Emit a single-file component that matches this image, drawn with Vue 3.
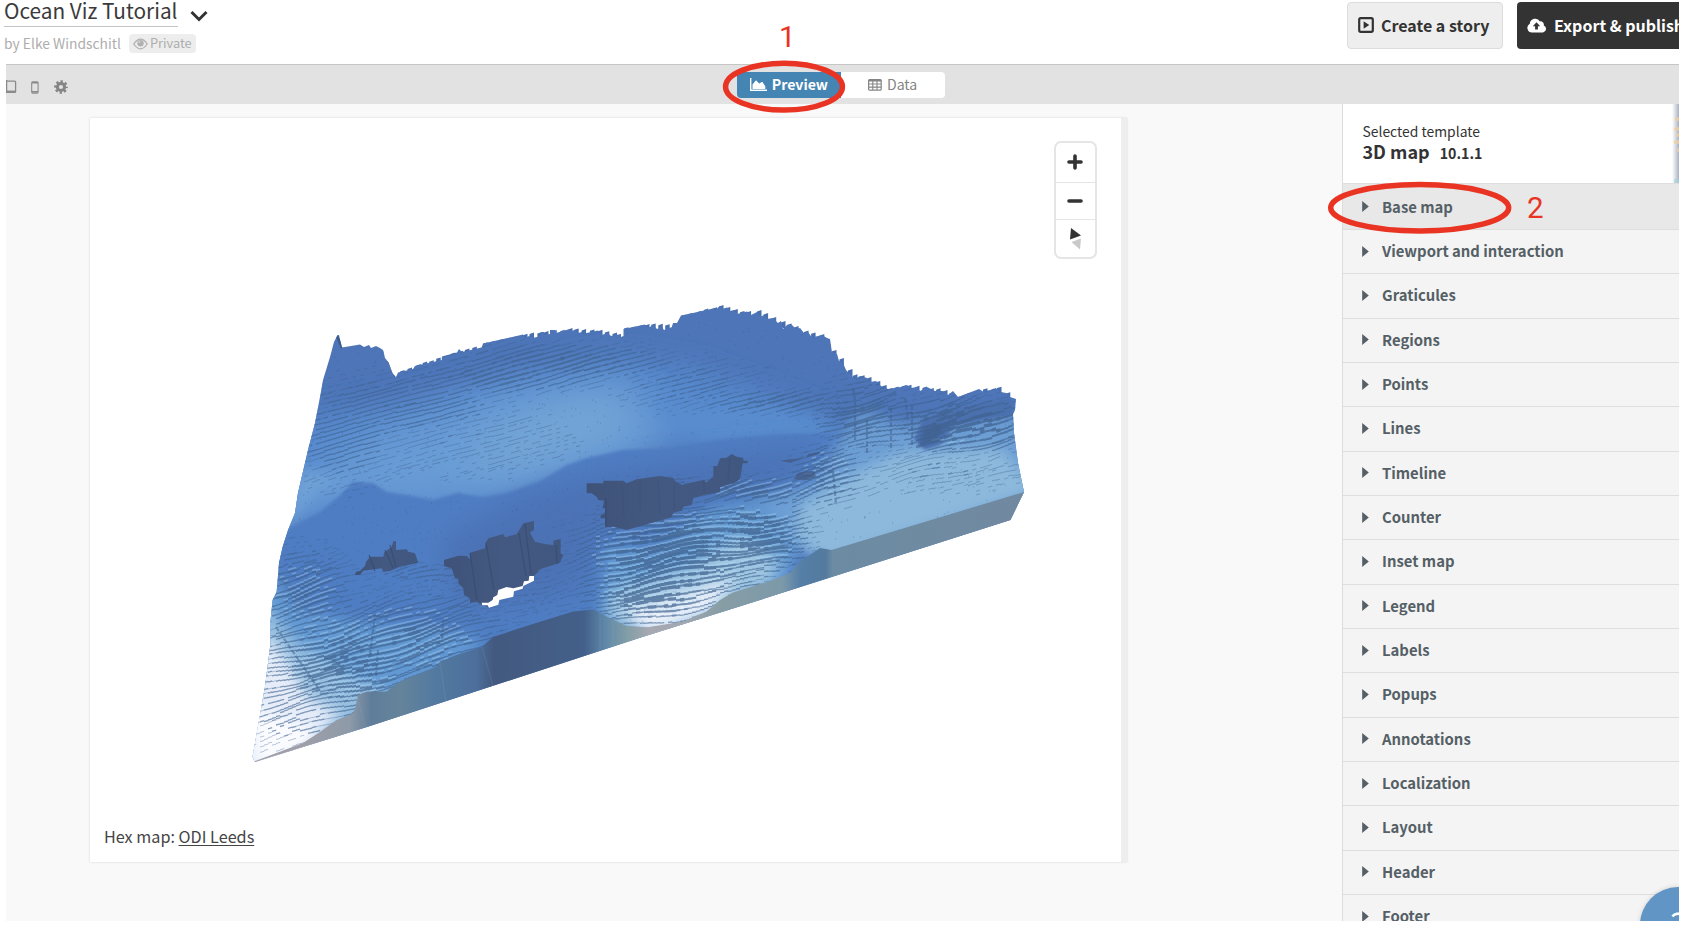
<script setup>
const sections = ['Base map', 'Viewport and interaction', 'Graticules', 'Regions', 'Points', 'Lines', 'Timeline', 'Counter', 'Inset map', 'Legend', 'Labels', 'Popups', 'Annotations', 'Localization', 'Layout', 'Header', 'Footer']

// Repeatable random numbers, so the terrain is the same on every load
let seed = 7
const rnd = () => {
  seed = (seed * 16807) % 2147483647
  return seed / 2147483647
}

// Terrace zones: centre x, centre y, radius x, radius y, strength
const zones = [
  [560, 362, 95, 15, 0.72], [500, 378, 85, 14, 0.62], [400, 405, 100, 30, 0.45], [340, 440, 55, 45, 0.42],
  [690, 385, 80, 28, 0.34], [780, 402, 75, 11, 0.62], [460, 440, 120, 40, 0.25],
  [670, 555, 74, 40, 1.15], [650, 590, 55, 28, 1.05], [755, 535, 42, 34, 0.95], [745, 490, 90, 12, 0.8],
  [825, 475, 30, 26, 0.75], [860, 415, 40, 30, 0.7], [960, 425, 65, 22, 1.0], [930, 470, 100, 26, 0.27],
  [345, 660, 70, 50, 0.8], [410, 640, 80, 40, 0.75], [290, 705, 50, 45, 0.4], [305, 595, 40, 40, 0.7],
  [500, 590, 90, 26, 0.3], [430, 575, 90, 12, 0.35]
]
const strength = (x, y) => {
  let s = 0
  for (const [cx, cy, rx, ry, k] of zones) {
    const d = ((x - cx) / rx) ** 2 + ((y - cy) / ry) ** 2
    if (d < 4) s = Math.max(s, k * Math.exp(-d * 0.8))
  }
  return s
}
const layers = [
  { width: 0.8, alpha: 0.45, d: '' },
  { width: 1.3, alpha: 0.6, d: '' },
  { width: 2.1, alpha: 0.68, d: '' },
  { width: 3.4, alpha: 0.74, d: '' }
]
let highlights = ''
let y0 = 330
for (let row = 0; row < 128; row++) {
  y0 += 4.3 + rnd() * 1.2
  let jog = 0
  for (let x = 252; x < 1024; x += 4) {
    if (rnd() < 0.22) jog = (rnd() - 0.5) * 2.6
    const base = y0 - (x - 252) * 0.27
    const amp = base < 470 && x < 820 ? 0.25 : 1.1
    // The bowl flattens out towards the level, the rest follows the grid
    const bowl = x > 595 && x < 790 && base > 500 ? (x - 690) * 0.13 : 0
    const wave = (Math.sin(x / 17 + row * 0.3) * 2 + Math.sin(x / 37 - row * 0.2) * 3) * amp
    const y = base + bowl + wave + jog * (0.3 + amp * 0.7)
    const s = strength(x, y) * (0.8 + rnd() * 0.4)
    if (s < 0.12 || rnd() > s * 3) continue
    const i = s > 0.8 ? 3 : s > 0.52 ? 2 : s > 0.28 ? 1 : 0
    const seg = `l4.2 ${bowl ? '-.5' : '-1.1'}`
    layers[i].d += `M${x} ${y.toFixed(1)}${seg}`
    if (i > 1 && base > 440) highlights += `M${x} ${(y - 2.4).toFixed(1)}${seg}`
  }
}
let specks = ''
for (let n = 0; n < 1300; n++) {
  const x = 270 + rnd() * 740
  const y = 320 + rnd() * 330
  specks += `M${x.toFixed(0)} ${y.toFixed(0)}h1.1`
}

// Stepped teeth of the grid columns along the far edge
const rim = [[400, 372], [442, 358], [483, 345], [523, 336], [568, 331], [598, 332], [621, 336], [624, 330], [645, 326], [672, 327], [681, 317], [719, 307.5], [740, 313], [757, 313], [781, 323], [804, 333], [830, 339], [832, 352], [853, 377], [867, 379], [888, 390], [907, 387], [943, 392], [958, 398], [983, 391], [997, 389.5], [1015, 400]]
let teeth = ''
for (let i = 0; i < rim.length - 1; i++) {
  const [ax, ay] = rim[i]
  const [bx, by] = rim[i + 1]
  for (let x = ax; x < bx - 4; x += 6 + rnd() * 3) {
    const y = ay + ((x - ax) / (bx - ax)) * (by - ay)
    teeth += `M${x.toFixed(1)} ${(y + 4).toFixed(1)}V${(y - 0.5 - rnd()).toFixed(1)}l4.5 -1.4V${(y + 6).toFixed(1)}Z`
  }
}
</script>

<template>
  <div class="page">
    <header class="top">
      <div class="project">
        <div class="title-row">
          <span class="title">Ocean Viz Tutorial</span>
          <svg class="chev" width="18" height="12" viewBox="0 0 18 12"><path d="M1.5 2 9 9.5 16.5 2" fill="none" stroke="#333" stroke-width="3" /></svg>
        </div>
        <div class="meta">
          <span class="author">by Elke Windschitl</span>
          <span class="badge">
            <svg width="15" height="12" viewBox="0 0 15 12"><path d="M.8 6Q4 1.2 7.5 1.2T14.2 6Q11 10.8 7.5 10.8T.8 6Z" fill="none" stroke="#b0b0b0" stroke-width="1.3" /><circle cx="7.5" cy="5.2" r="3.2" fill="#b0b0b0" /><path d="M5.8 5A1.8 1.8 0 0 1 7.5 3.3" stroke="#eee" fill="none" stroke-width=".8" /></svg>
            <span>Private</span>
          </span>
        </div>
      </div>
      <div class="actions">
        <button class="btn light">
          <svg width="16" height="16" viewBox="0 0 16 16"><rect x="1.2" y="1.2" width="13.6" height="13.6" rx="1.5" fill="none" stroke="#333" stroke-width="2.2" /><path d="M5.6 4.3 11.3 8 5.6 11.7Z" fill="#333" /></svg>
          <span>Create a story</span>
        </button>
        <button class="btn dark">
          <svg width="20" height="15" viewBox="0 0 20 15"><path d="M5 14.5A4.7 4.7 0 0 1 2.8 5.7 5.5 5.5 0 0 1 13 3.4a3.4 3.4 0 0 1 3.8 4.2A3.6 3.6 0 0 1 16 14.5Z" fill="#fff" /><path d="M9.5 4.2 13.2 8.2H10.9V11.5H8.1V8.2H5.8Z" fill="#333" /></svg>
          <span>Export &amp; publish</span>
        </button>
      </div>
    </header>

    <div class="toolbar">
      <div class="devices">
        <svg width="11" height="14" viewBox="0 0 11 14"><path d="M.6 0V12.4M0 1.2H8.6Q9.6 1.2 9.6 2.2V11.4Q9.6 12.4 8.6 12.4H0" fill="none" stroke="#8a8a8a" stroke-width="1.3" /><path d="M0 11.4H9.6" stroke="#8a8a8a" stroke-width="1.6" /></svg>
        <svg width="8" height="13" viewBox="0 0 8 13"><rect x=".7" y=".7" width="6.4" height="11.4" rx="1" fill="none" stroke="#8a8a8a" stroke-width="1.1" /><path d="M1 1.8H7M1 10.8H7" stroke="#8a8a8a" stroke-width="1.6" /></svg>
        <svg width="14" height="14" viewBox="0 0 14 14"><circle cx="7" cy="7" r="3.6" fill="none" stroke="#858585" stroke-width="3" /><circle cx="7" cy="7" r="5.5" fill="none" stroke="#858585" stroke-width="2.6" stroke-dasharray="2.3 2.02" stroke-dashoffset="1.15" /></svg>
      </div>
      <div class="tabs">
        <div class="tab on">
          <svg width="17" height="13" viewBox="0 0 17 13"><path d="M.7 0V12.3H17" fill="none" stroke="#fff" stroke-width="1.4" /><path d="M2.5 11V6.5L6 2.3 9.2 5.6 12.2 3.8 15.3 8.2V11Z" fill="#fff" /></svg>
          <span>Preview</span>
        </div>
        <div class="tab">
          <svg width="14" height="12" viewBox="0 0 14 12"><rect x=".6" y=".6" width="12.6" height="10.6" rx="1" fill="none" stroke="#858585" stroke-width="1.2" /><path d="M.6 1.6H13.2" stroke="#858585" stroke-width="1.8" /><path d="M.6 5H13.2M.6 8.1H13.2M4.8 1V11M9 1V11" stroke="#858585" stroke-width="1.1" /></svg>
          <span>Data</span>
        </div>
      </div>
    </div>

    <div class="body">
      <main class="stage">
        <div class="card">
          <svg class="terrain" width="1031" height="744" viewBox="90 118 1031 744">
            <defs>
              <clipPath id="land"><path d="M337.5 335L339 335 342 347.5 360 344.5 364 347 369 345 371 348 376 346 380 348 383 350 385 358 388.5 362.5 392.5 373 396 377.5 398 372.5 413 369 415 366 441.7 360 442 356.5 457 352.5 459 349 462 352 481.7 347.5 483 343.5 523 334.5 525 338 529 336 533 338 541 336V332L544 332V335L550 334V330L555 330 556 333 568 329.5 571 331 575 330 578 333 582 332V334L598 330.5 601.5 335 608 333 611 336 621 334V337L623.5 336V329L645 324.5 648 328 653 325 657 329 662 327 664 330 672 327 673 323 677 323 681 315.5 700 311.5 713 308.5 716 310 719.5 306 722 309 727 307.5 730 311 734 310 737 314 747 311.5 751 315 757 312 760 317 764 315 767 319 773 318 778 323 781 321 783 329 787 325 792 325 796 329 800 328 804 333 808 332 812 337.5 822 335 827 338 830 339 832 352.5 837 354 839 361 843 363 846 370 850 374 855 379 860 376 867 378 870 382 876 381 881 386 888 389 901 387 907 385 911 388 917 387 920 391 927 387 935 391 943 391 948 395 953 391 958 397 979 389 983 391.5 997 388.5 1001 392 1006 393 1010 397 1016 399 1015 410 1013 414 1014 433 1018 463 1024 492 1010.5 520 760 600 640 637.7 560 664 367 727 255 762 252.5 757 265 687 270.6 643 270.6 620 272.6 600 276.6 592 279 563 282.6 547 288 530 295 513 298 493 308 450 315 423 320 397 323 380 330 357 334 342Z" /></clipPath>
              <linearGradient id="face" gradientUnits="userSpaceOnUse" x1="303" y1="0" x2="1024" y2="0">
                <stop offset="0" stop-color="#a09fa9" /><stop offset=".065" stop-color="#8d9aa8" /><stop offset=".095" stop-color="#5f7d99" /><stop offset=".135" stop-color="#65849b" /><stop offset=".18" stop-color="#537aa0" /><stop offset=".24" stop-color="#4c6f9b" /><stop offset=".265" stop-color="#43597f" /><stop offset=".39" stop-color="#43608a" /><stop offset=".42" stop-color="#6089a9" /><stop offset=".45" stop-color="#829ea6" /><stop offset=".48" stop-color="#a7a8b1" /><stop offset=".53" stop-color="#a2a7af" /><stop offset=".58" stop-color="#879da5" /><stop offset=".665" stop-color="#7c99a9" /><stop offset=".69" stop-color="#557fa7" /><stop offset=".725" stop-color="#547a9e" /><stop offset=".735" stop-color="#6c8ca3" /><stop offset="1" stop-color="#7189a0" />
              </linearGradient>
              <linearGradient id="pit" x1="0" y1="0" x2="1" y2="0"><stop offset="0" stop-color="#3f5379" /><stop offset=".5" stop-color="#445981" /><stop offset="1" stop-color="#405780" /></linearGradient>
              <filter id="b6" x="-30%" y="-30%" width="160%" height="160%"><feGaussianBlur stdDeviation="7" /></filter>
              <filter id="b14" x="-40%" y="-60%" width="180%" height="220%"><feGaussianBlur stdDeviation="14" /></filter>
              <filter id="b20" x="-60%" y="-100%" width="220%" height="300%"><feGaussianBlur stdDeviation="20" /></filter>
              <filter id="b2" x="-10%" y="-10%" width="120%" height="120%"><feGaussianBlur stdDeviation="1.6" /></filter>
            </defs>
            <path :d="teeth" fill="#4a6fae" />
            <g clip-path="url(#land)">
              <rect x="240" y="290" width="800" height="490" fill="#4d75b8" />
              <!-- upper basin -->
              <path d="M290 420L400 405 520 372 620 358 700 370 790 405 840 425 820 440 640 450 540 490 400 510 270 530Z" fill="#5789cd" filter="url(#b14)" />
              <path d="M280 510L360 440 500 395 600 390 680 425 620 465 500 500 400 505Z" fill="#699cd5" filter="url(#b20)" />
              <ellipse cx="555" cy="432" rx="90" ry="24" fill="#76a6d6" transform="rotate(-20 555 432)" filter="url(#b20)" />
              <path d="M294 520L320 490 350 478 300 470 280 540Z" fill="#70a2d7" filter="url(#b6)" />
              <path d="M650 405L760 405 840 425 830 438 700 442Z" fill="#588cce" filter="url(#b6)" />
              <!-- central ridge -->
              <path d="M270 560L290 528 320 512 340 495 353 482 373 483 387 492 407 495 433 500 457 493 483 497 507 493 540 481 567 465 587 458 623 450 670 448 720 440 770 435 832 433 838 440 810 490 740 505 640 560 600 640 470 660 340 640Z" fill="#4f7dc3" filter="url(#b2)" />
              <path d="M440 540L520 498 600 475 740 455 820 445 790 480 690 505 600 525 580 590 460 610Z" fill="#4b72b5" filter="url(#b14)" />
              <!-- eastern shelf -->
              <path d="M836 445L860 410 900 425 1020 415 1045 500 830 565 770 530 755 500 820 480Z" fill="#6c9ed4" filter="url(#b6)" />
              <path d="M800 505L850 475 900 452 1000 448 1040 490 830 560 790 540Z" fill="#8db9dc" filter="url(#b6)" />
              <path d="M914 440L922 420 945 412 1010 398 1015 415 955 425 940 445 925 450Z" fill="#4b6fae" filter="url(#b2)" />
              <path d="M919 446L925 427 942 423 938 441Z" fill="#426599" filter="url(#b2)" />
              <!-- front bowl -->
              <path d="M605 548L660 548 710 508 760 500 800 545 790 580 650 640 600 615Z" fill="#649ad2" filter="url(#b6)" />
              <path d="M612 590L690 566 740 535 780 560 770 585 650 640 605 618Z" fill="#9fc6e2" filter="url(#b6)" />
              <path d="M622 608L680 594 735 578 710 612 650 635Z" fill="#e9f0fa" filter="url(#b6)" />
              <!-- south-west slope -->
              <path d="M265 560L300 610 380 625 470 635 485 645 390 700 300 740 240 700Z" fill="#6299d3" filter="url(#b6)" />
              <path d="M262 600L300 645 360 682 400 695 330 735 240 770Z" fill="#96bfe0" filter="url(#b6)" />
              <path d="M255 630L280 650 310 700 340 712 300 755 235 780Z" fill="#e6edf9" filter="url(#b6)" />
              <path d="M248 710L290 720 320 735 260 770Z" fill="#fbfcff" filter="url(#b6)" />
              <path :d="highlights" stroke="#b9e0fa" stroke-width="1.6" opacity=".32" fill="none" />
              <path v-for="(l, i) in layers" :key="i" :d="l.d" :stroke-width="l.width" :opacity="l.alpha" stroke="#40638f" fill="none" />
              <path :d="specks" stroke="#355684" stroke-width="1" opacity=".35" fill="none" />
              <path d="M853 388L855 400 855 440M905 398L908 420M912 405V445M891 408V448M867 420V455M833 470L836 505M375 615L370 655M378 650L376 676M443 620L442 642M276 627L318 688" stroke="#3f5f8c" stroke-width="2.2" stroke-dasharray="5 2" fill="none" opacity=".5" />
              <path d="M337 336L342 348M384 351L396 377" stroke="#39547f" stroke-width="2.5" opacity=".8" />
              <!-- sea-floor cut-outs -->
              <g fill="url(#pit)">
                <path transform="translate(560 430) scale(.3333)" d="M80 160H130V152H190L200 160 230 148 300 138 340 144 345 152 365 165 430 150 438 156 460 140V108H472L480 85 500 83 515 72 530 80 550 84V92H563V100H548L540 148 525 158 480 172V186L430 195 400 205 395 225 370 230 365 242 340 248 335 262 200 300 160 290 135 292V265H122V256L135 250V235H128L132 212 115 210 110 200 95 190H80Z" />
                <path transform="translate(240 520) scale(.3333)" d="M612 120L655 107 680 108 690 118V98L735 85 737 68 745 55 790 42 795 52 830 42 850 10 882 3V30L870 38 885 65 918 73 940 75V62L962 56V100L970 105 960 128 900 148 885 165 850 198 775 225 748 262 725 255 710 245 690 248V235L672 225 670 205 655 190V175H645L635 145 612 138Z" />
                <path transform="translate(240 520) scale(.3333)" d="M345 165L348 155 360 153 375 138 378 126 390 110 430 110 432 98 455 80 460 64H468V90L500 88 505 95 525 100 535 128 480 140 450 153 430 155 425 145 370 152 360 165Z" />
                <path opacity=".7" transform="translate(560 430) scale(.3333)" d="M660 92L690 88 735 84 745 72 785 64 770 74 730 86 690 98ZM700 148L715 128 760 122 768 138 740 151Z" />
              </g>
              <path d="M470 553L477 600M486 543L494 590M519 533L526 576M525 524L531 574M606 498V526M385 550L393 568M390 545L396 567M556 545L557 564M369 555L375 571" stroke="#364c70" stroke-width="1.3" fill="none" opacity=".75" />
              <path d="M622 484L624 516M640 480V512M658 480L660 515M674 484V510M730 459L728 481M704 480V493" stroke="#364c70" stroke-width="1.3" fill="none" opacity=".3" />
              <path transform="translate(240 520) scale(.3333)" d="M725 248L745 248 758 240 760 232 772 225 775 210 800 201 820 205 848 198 852 184 866 182 868 168H882V182L850 198 848 206 822 214 820 230 778 240 775 254 747 263 743 256H727Z" fill="#fff" />
              <!-- front wall -->
              <path d="M253 762L303 743 320 732 336.6 720 352 714 355 709 358 695 366.6 691.6 386.6 691.6 400 681.6 436.6 666.6 440 661.6 456.6 655 481.6 647 493 637 526.6 626 573 611.6 593 609.5 606.6 616.6 626.6 626 646.6 627.5 683 621.6 706.6 611.6 720 600 733 592.6 773 580 790 573 800 561.6 820 548 831.6 550 1024 492 1030 530 560 680 250 775Z" fill="url(#face)" />
              <path d="M440 662L446 702M482 647L493 686M357 697L366 728M600 613V650M613 620V646" stroke="#9ab5c6" stroke-width="1.5" opacity=".12" />
            </g>
          </svg>
          <div class="controls">
            <span><svg width="16" height="16" viewBox="0 0 16 16"><path d="M8 2V14M2 8H14" stroke="#333" stroke-width="3.6" stroke-linecap="round" /></svg></span>
            <span><svg width="16" height="16" viewBox="0 0 16 16"><path d="M2 8H14" stroke="#333" stroke-width="3.6" stroke-linecap="round" /></svg></span>
            <span><svg width="14" height="22" viewBox="0 0 14 22"><path d="M3 0 13 7.5 2 11.5Z" fill="#333" /><path d="M3.5 14 13 10.5 12 21.5Z" fill="#c9c9c9" /></svg></span>
          </div>
          <div class="credit">Hex map: <a>ODI Leeds</a></div>
        </div>
      </main>

      <aside class="side">
        <div class="template">
          <div class="tpl-text">
            <div class="small">Selected template</div>
            <div class="name">3D map <span>10.1.1</span></div>
          </div>
          <svg class="thumb" width="7" height="79" viewBox="0 0 7 79"><defs><linearGradient id="fade"><stop offset="0" stop-color="#b3b9c9" stop-opacity="0" /><stop offset="1" stop-color="#a9b0c1" /></linearGradient></defs><rect width="7" height="79" fill="url(#fade)" /><path d="M3 15H7M2 25H7M4 31H7M2 38H7M5 46H7" stroke="#f4cf9c" stroke-width="3.5" opacity=".75" /><path d="M2 77H7" stroke="#9ed5d8" stroke-width="4" opacity=".6" /></svg>
        </div>
        <div v-for="(s, i) in sections" :key="s" class="row" :class="{ hot: i === 0 }">
          <svg width="7" height="11" viewBox="0 0 7 11"><path d="M.2 0 6.8 5.5.2 11Z" fill="#555f66" /></svg>
          <span>{{ s }}</span>
        </div>
        <div class="help">?</div>
      </aside>
    </div>

    <svg class="marks" width="1682" height="928" viewBox="0 0 1682 928">
      <ellipse cx="784" cy="86.7" rx="58.4" ry="23.4" />
      <ellipse cx="1419.7" cy="207.7" rx="89" ry="23.2" />
      <text x="779" y="47">1</text>
      <text x="1527" y="218.3">2</text>
    </svg>
  </div>
</template>

<style>
body { background: #fff; overflow: hidden; }
</style>

<style scoped>
.page { position: relative; width: 1682px; height: 928px; overflow: hidden; font-family: "Noto Sans CJK JP", "Open Sans", sans-serif; color: #333; background: #fff; display: flex; flex-direction: column; }
.top { height: 64px; flex: none; display: flex; justify-content: space-between; padding-right: 3px; }
.project { padding-left: 4px; }
.title-row { display: flex; height: 27px; align-items: flex-start; }
.title { font-size: 20.8px; line-height: 20px; height: 26px; border-bottom: 1px solid #c4c4c4; white-space: nowrap; color: #3a3a3a; }
.chev { margin: 10px 0 0 12px; }
.meta { display: flex; align-items: center; margin-top: 7px; height: 19px; color: #adadad; }
.author { font-size: 13.85px; line-height: 19px; white-space: nowrap; }
.badge { display: flex; align-items: center; gap: 2px; margin-left: 8px; padding: 0 4px; height: 19px; border-radius: 4px; background: #ededed; font-size: 12.8px; line-height: 18px; }
.badge span { padding-bottom: 1px; }
.actions { display: flex; gap: 14px; padding-top: 2px; }
.btn { display: flex; align-items: center; height: 47px; box-sizing: border-box; border-radius: 4px; font: bold 16px/20px "Noto Sans CJK JP", sans-serif; padding: 0 0 0 10px; white-space: nowrap; overflow: hidden; }
.light { width: 156px; background: #eee; border: 1px solid #dcdcdc; color: #333; gap: 7px; }
.dark { width: 162px; background: #333; border: 0; color: #fff; gap: 7px; border-radius: 4px 0 0 4px; }
.btn svg { flex: none; margin-bottom: 1px; }
.btn span { padding-bottom: 2px; }
.toolbar { margin: 0 3px 0 6px; height: 39px; flex: none; background: #e2e2e2; border-top: 1px solid #c6c6c6; display: grid; grid-template-columns: 731px 207.5px 1fr; align-items: center; }
.devices { display: flex; align-items: center; gap: 15px; padding-top: 5px; }
.devices svg:nth-child(2) { margin-left: -1px; }
.tabs { display: flex; height: 26px; border-radius: 4px; overflow: hidden; background: #fff; }
.tab { flex: 1; display: flex; align-items: center; justify-content: center; gap: 5px; font-size: 14.1px; line-height: 22px; color: #858585; }
.tab span { padding-bottom: 1px; }
.on { background: #4585b3; color: #fff; font-weight: bold; }
.body { margin: 0 3px 0 6px; height: 817px; flex: none; display: flex; background: #f9f9f9; overflow: hidden; }
.stage { flex: 1; padding: 14px 0 0 84px; }
.card { position: relative; width: 1031px; height: 744px; background: #fff; border-right: 6px solid #eee; box-shadow: 0 0 2px rgba(0,0,0,.16); }
.terrain { display: block; }
.controls { position: absolute; right: 24px; top: 23px; width: 43px; height: 118px; box-sizing: border-box; border: 2px solid #e5e5e5; border-radius: 7px; display: flex; flex-direction: column; background: #fff; }
.controls span { flex: 1; display: flex; align-items: center; justify-content: center; }
.controls span svg { margin-right: 1px; }
.controls span:first-child { flex-basis: 2px; }
.controls span + span { border-top: 1.5px solid #e5e5e5; }
.credit { position: absolute; left: 14px; top: 707px; font-size: 16.2px; line-height: 22px; color: #444; white-space: nowrap; }
.credit a { text-decoration: underline; text-underline-offset: 2px; }
.side { position: relative; width: 337px; box-sizing: border-box; border-left: 1px solid #dcdcdc; background: #f4f4f4; overflow: hidden; }
.template { height: 79px; background: #fff; display: flex; justify-content: space-between; }
.tpl-text { padding: 17px 0 0 19.5px; }
.small { font-size: 13.9px; line-height: 20px; }
.name { font-size: 18px; line-height: 20px; font-weight: bold; }
.name span { font-size: 14.2px; margin-left: 6px; }
.row { height: 44.33px; box-sizing: border-box; border-top: 1.5px solid #dedede; display: flex; align-items: center; gap: 13px; padding: 0 0 1px 19px; font-size: 14.85px; line-height: 20px; font-weight: bold; color: #555f66; }
.row.hot { height: 46px; background: #e8e8e8; padding-top: 1px; }
.row span { white-space: nowrap; }
.help { position: absolute; left: 297px; top: 783px; width: 76px; height: 76px; border-radius: 50%; background: #6095c5; color: #fff; font-size: 34px; line-height: 76px; text-align: center; box-shadow: 0 0 5px rgba(0,0,0,.15); }
.marks { position: absolute; left: 0; top: 0; }
.marks ellipse { fill: none; stroke: #e93423; stroke-width: 5.5; }
.marks text { font: 29.5px Roboto, sans-serif; fill: #e93423; }
</style>
